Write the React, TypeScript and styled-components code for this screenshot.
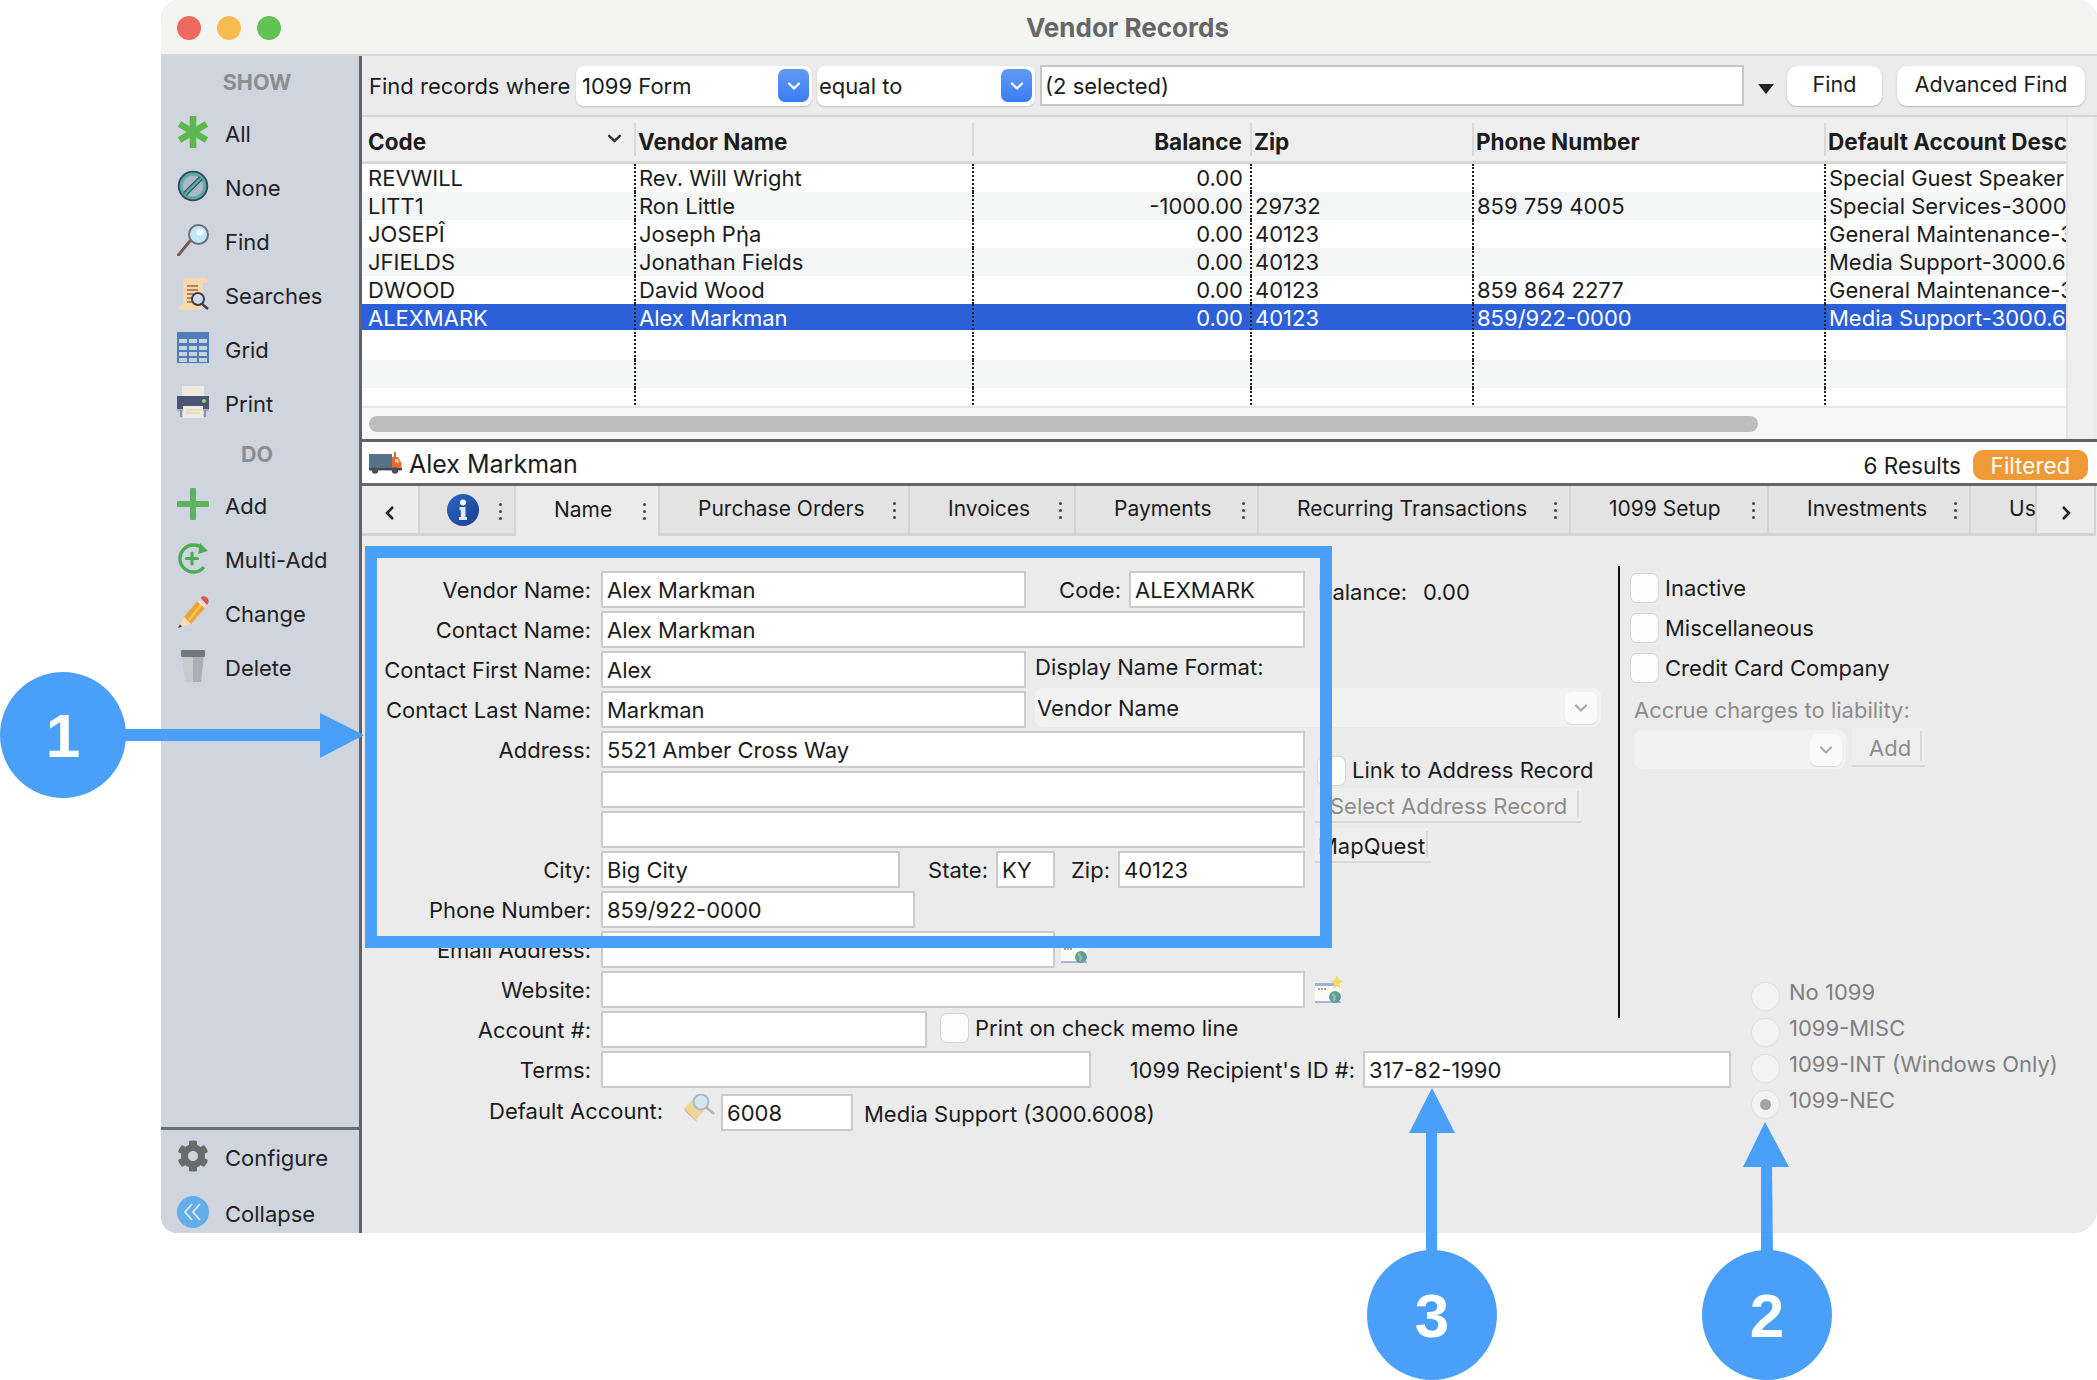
import * as React from "react";
import styled, { createGlobalStyle } from "styled-components";
import { FaCog } from "react-icons/fa";

const FONT = `"Inter", "Liberation Sans", Arial, sans-serif`;
const BLUE = "#4a9ff8";

const GlobalStyle = createGlobalStyle`
  html, body { margin: 0; padding: 0; background: #fff; }
  body { font-family: ${FONT}; font-size: 22px; color: #1c1c1c; }
  * { box-sizing: border-box; }
`;

const Page = styled.div`
  position: relative;
  width: 2097px;
  height: 1380px;
  padding-left: 161px;
  overflow: hidden;
`;

const Window = styled.div`
  width: 1936px;
  height: 1233px;
  display: flex;
  flex-direction: column;
  background: #ebebeb;
  border-radius: 18px 18px 22px 16px;
  overflow: hidden;
`;

const TitleBar = styled.div`
  position: relative;
  height: 56px;
  flex: none;
  display: flex;
  align-items: center;
  justify-content: center;
  padding-right: 3px;
  background: #f4f4f2;
  border-bottom: 2px solid #d9d9d9;
  font-weight: 700;
  font-size: 26px;
  color: #666;
`;

const Lights = styled.div`
  position: absolute;
  left: 16px;
  top: 16px;
  display: flex;
  gap: 16px;
`;

const Light = styled.span<{ $c: string }>`
  width: 24px;
  height: 24px;
  border-radius: 50%;
  background: ${(p) => p.$c};
`;

const Body = styled.div`
  flex: 1;
  display: flex;
  min-height: 0;
`;

const Sidebar = styled.div`
  width: 201px;
  flex: none;
  display: flex;
  flex-direction: column;
  background: #cfd5de;
  border-right: 3px solid #5f6368;
`;

const SideHead = styled.div<{ $h: number }>`
  height: ${(p) => p.$h}px;
  display: flex;
  align-items: flex-end;
  justify-content: center;
  padding: 0 6px 10px 0;
  font-weight: 700;
  font-size: 21.5px;
  color: #8a8d92;
`;

const SideItem = styled.div<{ $h?: number }>`
  height: ${(p) => p.$h || 54}px;
  display: flex;
  align-items: center;
  padding-left: 16px;
  gap: 17px;
  color: #222;
`;

const IconBox = styled.span`
  width: 32px;
  height: 32px;
  flex: none;
  display: flex;
  align-items: center;
  justify-content: center;
`;

const SideLabel = styled.span`
  line-height: 1;
  margin: 4px 0 0 -1px;
`;

const SideFooter = styled.div`
  margin-top: auto;
  height: 106px;
  flex: none;
  border-top: 3px solid #6a6e74;
`;

const Main = styled.div`
  flex: 1;
  min-width: 0;
  display: flex;
  flex-direction: column;
`;

const FindBar = styled.div`
  height: 61px;
  flex: none;
  display: flex;
  align-items: center;
  padding: 0 0 0 7px;
  border-bottom: 2px solid #d6d6d6;
`;

const FindLabel = styled.span`
  width: 207px;
  flex: none;
  white-space: nowrap;
`;

const SelectBox = styled.div<{ $w: number; $ml?: number; $pl: number }>`
  width: ${(p) => p.$w}px;
  margin-left: ${(p) => p.$ml || 0}px;
  height: 40px;
  flex: none;
  display: flex;
  align-items: center;
  justify-content: space-between;
  padding: 0 3px 0 ${(p) => p.$pl}px;
  background: #fff;
  border-radius: 8px;
  box-shadow: 0 1px 2px rgba(0, 0, 0, 0.18);
`;

const BlueChevron = styled.span`
  width: 31px;
  height: 33px;
  display: flex;
  align-items: center;
  justify-content: center;
  border-radius: 7px;
  background: linear-gradient(#5f9bf6, #3a7df0);
`;

const QueryField = styled.div`
  width: 704px;
  height: 41px;
  flex: none;
  margin-left: 5px;
  display: flex;
  align-items: center;
  padding-left: 3px;
  background: #fff;
  border: 2px solid #c6c6c6;
`;

const FindCaret = styled.span`
  width: 43px;
  flex: none;
  display: flex;
  justify-content: center;
  padding-top: 6px;
`;

const PushButton = styled.div<{ $w: number; $ml?: number }>`
  width: ${(p) => p.$w}px;
  margin-left: ${(p) => p.$ml || 0}px;
  height: 40px;
  flex: none;
  display: flex;
  align-items: center;
  justify-content: center;
  padding-bottom: 3px;
  background: #fff;
  border-radius: 10px;
  box-shadow: 0 1px 2px rgba(0, 0, 0, 0.22);
  font-size: 21.5px;
`;

const RecordArea = styled.div`
  flex: none;
  display: flex;
  height: 325px;
  border-bottom: 3px solid #626262;
`;

const RecordLeft = styled.div`
  width: 1704px;
  flex: none;
  display: flex;
  flex-direction: column;
`;

const Gutter = styled.div`
  flex: 1;
  margin-right: 4px;
  background: #efefef;
  border-left: 2px solid #e4e4e4;
`;

const COLS = "272px 338px 278px 222px 352px 242px";

const HeadRow = styled.div`
  height: 47px;
  flex: none;
  display: grid;
  grid-template-columns: ${COLS};
  background: #efefef;
  border-bottom: 3px solid #d8d8d8;
`;

const HeadCell = styled.div<{ $right?: boolean; $first?: boolean }>`
  position: relative;
  display: flex;
  align-items: center;
  justify-content: ${(p) => (p.$right ? "flex-end" : "space-between")};
  padding: 5px ${(p) => (p.$right ? "8px" : "0")} 0 ${(p) => (p.$first ? "6px" : "4px")};
  font-weight: 700;
  font-size: 22.5px;
  white-space: nowrap;
  &::before {
    content: "";
    display: ${(p) => (p.$first ? "none" : "block")};
    position: absolute;
    left: 0;
    top: 6px;
    bottom: 5px;
    width: 2px;
    background: #dadada;
  }
`;

const HeadChevron = styled.span`
  margin: 0 12px 6px 0;
  display: flex;
`;

const RowsBox = styled.div`
  height: 244px;
  flex: none;
  overflow: hidden;
  border-bottom: 2px solid #e6e6e6;
`;

const Row = styled.div<{ $alt: boolean; $sel: boolean }>`
  height: 28px;
  display: grid;
  grid-template-columns: ${COLS};
  background: ${(p) => (p.$sel ? "#2b60d9" : p.$alt ? "#f4f5f5" : "#fff")};
  color: ${(p) => (p.$sel ? "#fff" : "#1c1c1c")};
  border-bottom: ${(p) => (p.$sel ? "2px solid #fff" : "none")};
`;

const Cell = styled.div<{ $right?: boolean; $first?: boolean }>`
  padding: 0 ${(p) => (p.$right ? "7px" : "0")} 0 ${(p) => (p.$first ? "6px" : "3px")};
  line-height: 28px;
  text-align: ${(p) => (p.$right ? "right" : "left")};
  white-space: nowrap;
  overflow: hidden;
  border-left: ${(p) => (p.$first ? "none" : "2px dotted #222")};
`;

const ScrollTrack = styled.div`
  flex: 1;
  padding: 8px 0 0 7px;
  background: #f8f8f8;
`;

const ScrollThumb = styled.div`
  width: 1389px;
  height: 16px;
  border-radius: 8px;
  background: #bdbdbd;
`;

const DetailHead = styled.div`
  height: 44px;
  flex: none;
  display: flex;
  align-items: center;
  padding: 5px 9px 0 7px;
  background: #fff;
  border-bottom: 3px solid #666;
`;

const TruckSlot = styled.span`
  display: flex;
  margin-top: -5px;
`;

const DetailName = styled.span`
  margin: -3px 0 0 7px;
  font-size: 25px;
`;

const ResultCount = styled.span`
  margin-left: auto;
  font-size: 22.5px;
`;

const FilteredPill = styled.span`
  width: 115px;
  height: 30px;
  margin-left: 12px;
  display: flex;
  align-items: center;
  justify-content: center;
  border-radius: 10px;
  background: #f09a37;
  color: #fff;
  font-size: 22.5px;
`;

const TabBar = styled.div`
  height: 50px;
  flex: none;
  display: flex;
`;

const Tab = styled.div<{ $w: number; $active?: boolean }>`
  width: ${(p) => p.$w}px;
  flex: none;
  display: flex;
  align-items: center;
  justify-content: space-between;
  padding: 0 12px 3px 38px;
  font-size: 21px;
  white-space: nowrap;
  background: ${(p) => (p.$active ? "#ebebeb" : "#e3e3e3")};
  border-right: 2px solid #d4d4d4;
  border-bottom: ${(p) => (p.$active ? "none" : "3px solid #d4d4d4")};
`;

const NavTab = styled.div<{ $w: number }>`
  width: ${(p) => p.$w}px;
  flex: none;
  display: flex;
  align-items: center;
  justify-content: center;
  padding-top: 2px;
  background: #ebebeb;
  border-right: 2px solid #d4d4d4;
  border-bottom: 3px solid #d4d4d4;
`;

const InfoTab = styled(Tab)`
  padding: 0 12px 0 27px;
`;

const Kebab = styled.span`
  display: flex;
  flex-direction: column;
  gap: 4px;
  padding-top: 4px;
  i {
    display: block;
    width: 3px;
    height: 3px;
    border-radius: 50%;
    background: #444;
  }
`;

const DetailBody = styled.div`
  flex: 1;
  display: flex;
  padding-top: 35px;
`;

const LeftCol = styled.div`
  width: 953px;
  flex: none;
`;

const FormRow = styled.div`
  height: 40px;
  width: max-content;
  display: flex;
  align-items: flex-start;
`;

const AccountRow = styled(FormRow)`
  padding-top: 1px;
`;

const Label = styled.div<{ $w: number }>`
  width: ${(p) => p.$w}px;
  flex: none;
  height: 37px;
  padding-right: ${(p) => (p.$w === 239 ? "10px" : "8px")};
  line-height: 39px;
  text-align: right;
  white-space: nowrap;
`;

const Field = styled.div<{ $w: number; $mt?: number }>`
  width: ${(p) => p.$w}px;
  height: 37px;
  flex: none;
  margin-top: ${(p) => p.$mt || 0}px;
  padding-left: 4px;
  line-height: 35px;
  background: #fff;
  border: 2px solid #cbcbcb;
  white-space: nowrap;
`;

const Plain = styled.div<{ $ml?: number; $mt?: number }>`
  margin-left: ${(p) => p.$ml || 0}px;
  margin-top: ${(p) => p.$mt || 0}px;
  line-height: 37px;
  white-space: nowrap;
`;

const GrayPick = styled.div<{ $w: number; $ml?: number; $mt?: number }>`
  width: ${(p) => p.$w}px;
  height: 39px;
  flex: none;
  margin-left: ${(p) => p.$ml || 0}px;
  margin-top: ${(p) => p.$mt || 0}px;
  display: flex;
  align-items: center;
  justify-content: space-between;
  padding: 0 4px 0 2px;
  background: #f2f2f2;
  border-radius: 8px;
`;

const PickChevron = styled.span`
  width: 32px;
  height: 32px;
  display: flex;
  align-items: center;
  justify-content: center;
  background: #fafafa;
  border-radius: 7px;
  box-shadow: 0 1px 1px rgba(0, 0, 0, 0.1);
`;

const Check = styled.span<{ $ml?: number; $mt?: number }>`
  width: 27px;
  height: 28px;
  flex: none;
  margin-left: ${(p) => p.$ml || 0}px;
  margin-top: ${(p) => p.$mt || 0}px;
  background: #fdfdfd;
  border-radius: 6px;
  box-shadow: 0 0 0 1px #d6d6d6;
`;

const MidCol = styled.div`
  width: 303px;
  flex: none;
  display: flex;
  flex-direction: column;
  align-items: flex-start;
`;

const BalanceRow = styled.div`
  height: 40px;
  padding: 3px 0 0 3px;
  display: flex;
  line-height: 37px;
  span:first-child {
    width: 105px;
  }
`;

const LinkRow = styled.div`
  margin-top: 146px;
  height: 31px;
  padding-left: 3px;
  display: flex;
  align-items: flex-start;
  gap: 7px;
  line-height: 27px;
`;

const GhostButton = styled.div<{ $w: number; $muted?: boolean; $pad: number }>`
  width: ${(p) => p.$w}px;
  height: 35px;
  margin-bottom: 5px;
  padding-left: ${(p) => p.$pad}px;
  background: #eeeeee;
  border-bottom: 2px solid #d8d8d8;
  color: ${(p) => (p.$muted ? "#8d8d8d" : "#1c1c1c")};
  line-height: 36px;
  white-space: nowrap;
  position: relative;
  &::after {
    content: "";
    position: absolute;
    right: 3px;
    top: 3px;
    bottom: 4px;
    width: 2px;
    background: #d8d8d8;
  }
`;

const VLine = styled.div`
  width: 2px;
  height: 452px;
  flex: none;
  margin-top: -5px;
  background: #111;
`;

const RightCol = styled.div`
  flex: 1;
  padding: 3px 0 0 11px;
`;

const CheckRow = styled.div`
  height: 40px;
  display: flex;
  align-items: flex-start;
  gap: 7px;
  line-height: 28px;
`;

const AccrueLabel = styled.div`
  height: 36px;
  padding-left: 3px;
  line-height: 32px;
  color: #8d8d8d;
`;

const AccrueRow = styled.div`
  display: flex;
  gap: 6px;
  padding-left: 3px;
`;

const AddButton = styled(GhostButton)`
  margin-top: -2px;
  height: 39px;
  line-height: 41px;
`;

const RadioGroup = styled.div`
  margin: 211px 0 0 121px;
`;

const RadioRow = styled.div`
  height: 36px;
  display: flex;
  align-items: flex-start;
  gap: 10px;
  line-height: 18px;
  color: #808080;
  white-space: nowrap;
`;

const Radio = styled.span<{ $on?: boolean }>`
  width: 27px;
  height: 27px;
  flex: none;
  display: flex;
  align-items: center;
  justify-content: center;
  border-radius: 50%;
  background: #f3f3f3;
  box-shadow: 0 0 0 1px #e0e0e0;
  &::after {
    content: "";
    display: ${(p) => (p.$on ? "block" : "none")};
    width: 11px;
    height: 11px;
    border-radius: 50%;
    background: #a3a3a3;
  }
`;

const IconSlot = styled.span<{ $ml: number; $mt?: number; $w: number }>`
  width: ${(p) => p.$w}px;
  flex: none;
  margin-left: ${(p) => p.$ml}px;
  margin-top: ${(p) => p.$mt || 0}px;
  display: flex;
`;

/* callouts drawn over the screenshot */
const HighlightBox = styled.div`
  position: absolute;
  left: 365px;
  top: 546px;
  width: 967px;
  height: 402px;
  border: 12px solid ${BLUE};
`;

const ArrowLayer = styled.svg`
  position: absolute;
  left: 0;
  top: 0;
  pointer-events: none;
`;

const Marker = styled.div<{ $x: number; $y: number; $r: number }>`
  position: absolute;
  left: ${(p) => p.$x - p.$r}px;
  top: ${(p) => p.$y - p.$r}px;
  width: ${(p) => p.$r * 2}px;
  height: ${(p) => p.$r * 2}px;
  display: flex;
  align-items: center;
  justify-content: center;
  border-radius: 50%;
  background: ${BLUE};
  color: #fff;
  font-family: "Liberation Sans", Arial, sans-serif;
  font-weight: 700;
  font-size: 62px;
`;

const Chevron = ({ color, size = 14 }: { color: string; size?: number }) => (
  <svg width={size} height={size} viewBox="0 0 14 14">
    <path d="M2 4.5 L7 9.5 L12 4.5" fill="none" stroke={color} strokeWidth="2.2" strokeLinecap="round" strokeLinejoin="round" />
  </svg>
);

const NavArrow = ({ dir }: { dir: "l" | "r" }) => (
  <svg width="12" height="18" viewBox="0 0 12 18" style={{ marginTop: 4 }}>
    <path d={dir === "l" ? "M9 3 L3 9 L9 15" : "M3 3 L9 9 L3 15"} fill="none" stroke="#222" strokeWidth="2.6" />
  </svg>
);

const AllIcon = () => (
  <svg width="32" height="32" viewBox="0 0 32 32">
    <g stroke="#5bb84b" strokeWidth="6.5">
      <path d="M16 0 V32" />
      <path d="M2.5 8 L29.5 24" />
      <path d="M2.5 24 L29.5 8" />
    </g>
  </svg>
);

const NoneIcon = () => (
  <svg width="32" height="32" viewBox="0 0 32 32">
    <circle cx="16" cy="16" r="15.2" fill="#37474d" />
    <circle cx="16" cy="16" r="13.4" fill="#58a9b2" />
    <circle cx="16" cy="16" r="10.4" fill="#a9bbc4" />
    <path d="M8 24 L24 8" stroke="#37474d" strokeWidth="5" />
    <path d="M8 24 L24 8" stroke="#58a9b2" strokeWidth="2.6" />
  </svg>
);

const FindIcon = () => (
  <svg width="32" height="32" viewBox="0 0 32 32">
    <path d="M1.5 31 L13 17" stroke="#7d5a52" strokeWidth="3" strokeLinecap="round" />
    <circle cx="21.5" cy="10.5" r="9.5" fill="#c3e6f7" stroke="#6d6f80" strokeWidth="2" />
    <circle cx="23" cy="8" r="3.5" fill="#f4fbff" />
  </svg>
);

const SearchesIcon = () => (
  <svg width="32" height="32" viewBox="0 0 32 32">
    <path d="M6 2 Q6 0 9 0 H29 Q32 2 30 5 H26 V28 Q26 32 22 32 H1 Q0 28 4 27 H6 Z" fill="#f6d8ae" />
    <g stroke="#a96c4a" strokeWidth="1.6">
      <path d="M10 8 H21" />
      <path d="M10 12 H21" />
      <path d="M10 16 H17" />
      <path d="M10 20 H15" />
      <path d="M10 24 H15" />
    </g>
    <circle cx="21" cy="21" r="6" fill="#cfdbe8" stroke="#3e3e44" strokeWidth="2" />
    <path d="M25 26 L31 31" stroke="#3e3e44" strokeWidth="2.4" />
  </svg>
);

const GridIcon = () => (
  <svg width="32" height="32" viewBox="0 0 32 32">
    <rect width="32" height="31" fill="#517db6" />
    {[7, 14, 20, 26].map((y) =>
      [2, 12, 22].map((x) => <rect key={`${x}-${y}`} x={x} y={y} width="8" height="4" fill="#c5d2e2" />)
    )}
  </svg>
);

const PrintIcon = () => (
  <svg width="32" height="32" viewBox="0 0 32 32">
    <rect x="5" y="0" width="22" height="11" fill="#efeadc" />
    <rect x="0" y="10" width="32" height="14" fill="#4a5578" />
    <rect x="0" y="23" width="32" height="2.5" fill="#aeb2b8" />
    <circle cx="27" cy="15" r="2" fill="#a4d65e" />
    <path d="M4 24 V31 M28 24 V31" stroke="#8b93b5" strokeWidth="2" />
    <rect x="6" y="20" width="20" height="12" fill="#efeadc" />
    <path d="M9 24 H23 M9 27 H23" stroke="#d8d2bf" strokeWidth="1.2" />
  </svg>
);

const AddIcon = () => (
  <svg width="32" height="32" viewBox="0 0 32 32">
    <path d="M16 2 V30 M2 16 H30" stroke="#5cb35c" strokeWidth="6" strokeLinecap="round" />
  </svg>
);

const MultiAddIcon = () => (
  <svg width="32" height="32" viewBox="0 0 32 32">
    <path d="M26 7 A13.5 13.5 0 1 0 27 25" fill="none" stroke="#4cab55" strokeWidth="3.4" />
    <path d="M23 1 L31 9 L21 12 Z" fill="#4cab55" />
    <path d="M15 11 V22 M9.5 16.5 H20.5" stroke="#4cab55" strokeWidth="3.2" strokeLinecap="round" />
  </svg>
);

const ChangeIcon = () => (
  <svg width="32" height="32" viewBox="0 0 32 32">
    <path d="M7 21 L22 3 L30 9.5 L14 28 Z" fill="#f0a22e" />
    <path d="M12 24 L26 6.5" stroke="#fbc662" strokeWidth="2.5" />
    <path d="M7 21 L14 28 L1 32 Z" fill="#f6dcae" />
    <path d="M3 28.5 L5 30.5 L1 32 Z" fill="#333" />
    <path d="M22 3 L30 9.5 L28 12 L20 5.5 Z" fill="#e9e3d3" />
    <path d="M23.5 1.5 Q27 -1 30.5 2 Q33 6 30 9 Z" fill="#d4574a" />
  </svg>
);

const DeleteIcon = () => (
  <svg width="32" height="32" viewBox="0 0 32 32">
    <path d="M5 6 H16 V32 H8 Z" fill="#c9cacf" />
    <path d="M16 6 H27 L24 32 H16 Z" fill="#aeafb4" />
    <rect x="4" y="0" width="24" height="7" rx="1" fill="#76777d" />
  </svg>
);

const CollapseIcon = () => (
  <svg width="32" height="32" viewBox="0 0 32 32">
    <circle cx="16" cy="16" r="16" fill="#63aee6" />
    <path d="M15 8 L8 16 L15 24 M23 8 L16 16 L23 24" fill="none" stroke="#d7ecfb" strokeWidth="1.8" />
  </svg>
);

const TruckIcon = () => (
  <svg width="33" height="22" viewBox="0 0 33 22">
    <path d="M0 2 H23 V16 H0 Z" fill="#567188" />
    <path d="M23 5 H29 L32.5 11 V17 H23 Z" fill="#ee6a2c" />
    <path d="M26 0 V5" stroke="#c5462a" strokeWidth="1.6" />
    <path d="M26 7 H29 L30.5 10.5 H26 Z" fill="#f8c9a6" />
    <rect x="0" y="16" width="33" height="2.4" fill="#3c4a57" />
    <circle cx="6" cy="18.5" r="3.2" fill="#4a4f55" />
    <circle cx="26" cy="18.5" r="3.2" fill="#4a4f55" />
  </svg>
);

const InfoIcon = () => (
  <svg width="32" height="32" viewBox="0 0 32 32">
    <defs>
      <linearGradient id="infoFill" x1="0" y1="0" x2="1" y2="1">
        <stop offset="0" stopColor="#2f66c4" />
        <stop offset="1" stopColor="#173f8f" />
      </linearGradient>
    </defs>
    <circle cx="16" cy="16" r="16" fill="url(#infoFill)" />
    <circle cx="16" cy="8.5" r="3" fill="#fff" />
    <path d="M12.5 13 H18.5 V23 H20 V26 H12 V23 H13.8 V16 H12.5 Z" fill="#dfe9f8" />
  </svg>
);

const WebIcon = ({ star }: { star?: boolean }) => (
  <svg width="28" height="28" viewBox="0 0 28 28">
    <rect x="0" y="8" width="26" height="20" fill="#fbfbf6" />
    <rect x="0" y="8" width="24" height="3" fill="#9fb0db" />
    <rect x="0" y="26" width="26" height="2" fill="#a9b4d6" />
    <path d="M3 14 H12" stroke="#888" strokeWidth="1.4" strokeDasharray="2 1" />
    <circle cx="20" cy="22" r="6" fill="#5d9ea5" />
    <path d="M17 19 Q21 21 19 26" stroke="#a9c27a" strokeWidth="2" fill="none" />
    {star && <path d="M22 0 L24 5 L28 6 L24.5 9 L25.5 14 L22 11 L18 14 L19.2 9 L16 6 L20 5 Z" fill="#f7d862" />}
  </svg>
);

const LookupIcon = () => (
  <svg width="31" height="28" viewBox="0 0 31 28">
    <path d="M0 14 L13 3 L24 12 L12 26 Z" fill="#f1d793" />
    <path d="M0 14 L12 26 L13 28 L1 17 Z" fill="#dfa98f" />
    <circle cx="17" cy="8" r="7.5" fill="#d6e6ee" stroke="#9fc0cf" strokeWidth="2" />
    <path d="M22 13 L30 20" stroke="#b7b5a8" strokeWidth="2.5" />
  </svg>
);

const Dots = () => (
  <Kebab>
    <i />
    <i />
    <i />
  </Kebab>
);

const topNav = [
  { label: "All", icon: <AllIcon /> },
  { label: "None", icon: <NoneIcon /> },
  { label: "Find", icon: <FindIcon /> },
  { label: "Searches", icon: <SearchesIcon /> },
  { label: "Grid", icon: <GridIcon /> },
  { label: "Print", icon: <PrintIcon /> },
];

const doNav = [
  { label: "Add", icon: <AddIcon /> },
  { label: "Multi-Add", icon: <MultiAddIcon /> },
  { label: "Change", icon: <ChangeIcon /> },
  { label: "Delete", icon: <DeleteIcon /> },
];

const rows = [
  ["REVWILL", "Rev. Will Wright", "0.00", "", "", "Special Guest Speaker"],
  ["LITT1", "Ron Little", "-1000.00", "29732", "859 759 4005", "Special Services-3000.6000"],
  ["JOSEPÎ", "Joseph Pήa", "0.00", "40123", "", "General Maintenance-3000.6000"],
  ["JFIELDS", "Jonathan Fields", "0.00", "40123", "", "Media Support-3000.6008"],
  ["DWOOD", "David Wood", "0.00", "40123", "859 864 2277", "General Maintenance-3000.6000"],
  ["ALEXMARK", "Alex Markman", "0.00", "40123", "859/922-0000", "Media Support-3000.6008"],
  ["", "", "", "", "", ""],
  ["", "", "", "", "", ""],
  ["", "", "", "", "", ""],
];

const tabs = [
  { label: "Purchase Orders", w: 250 },
  { label: "Invoices", w: 166 },
  { label: "Payments", w: 183 },
  { label: "Recurring Transactions", w: 312 },
  { label: "1099 Setup", w: 198 },
  { label: "Investments", w: 202 },
];

const headers = ["Code", "Vendor Name", "Balance", "Zip", "Phone Number", "Default Account Desc"];

export default function App() {
  return (
    <Page>
      <GlobalStyle />
      <Window>
        <TitleBar>
          <Lights>
            <Light $c="#ee6a5f" />
            <Light $c="#f5bd4f" />
            <Light $c="#61c354" />
          </Lights>
          Vendor Records
        </TitleBar>
        <Body>
          <Sidebar>
            <SideHead $h={49}>SHOW</SideHead>
            {topNav.map((n) => (
              <SideItem key={n.label}>
                <IconBox>{n.icon}</IconBox>
                <SideLabel>{n.label}</SideLabel>
              </SideItem>
            ))}
            <SideHead $h={48}>DO</SideHead>
            {doNav.map((n) => (
              <SideItem key={n.label}>
                <IconBox>{n.icon}</IconBox>
                <SideLabel>{n.label}</SideLabel>
              </SideItem>
            ))}
            <SideFooter>
              <SideItem $h={52}>
                <IconBox>
                  <FaCog size={32} color="#6b6b6b" />
                </IconBox>
                <SideLabel>Configure</SideLabel>
              </SideItem>
              <SideItem $h={60}>
                <IconBox>
                  <CollapseIcon />
                </IconBox>
                <SideLabel>Collapse</SideLabel>
              </SideItem>
            </SideFooter>
          </Sidebar>
          <Main>
            <FindBar>
              <FindLabel>Find records where</FindLabel>
              <SelectBox $w={236} $pl={6}>
                1099 Form
                <BlueChevron>
                  <Chevron color="#fff" />
                </BlueChevron>
              </SelectBox>
              <SelectBox $w={218} $ml={5} $pl={2}>
                equal to
                <BlueChevron>
                  <Chevron color="#fff" />
                </BlueChevron>
              </SelectBox>
              <QueryField>(2 selected)</QueryField>
              <FindCaret>
                <svg width="16" height="10" viewBox="0 0 16 10">
                  <path d="M0 0 H16 L8 10 Z" fill="#222" />
                </svg>
              </FindCaret>
              <PushButton $w={95}>Find</PushButton>
              <PushButton $w={188} $ml={15}>
                Advanced Find
              </PushButton>
            </FindBar>
            <RecordArea>
              <RecordLeft>
                <HeadRow>
                  {headers.map((h, i) => (
                    <HeadCell key={h} $right={i === 2} $first={i === 0}>
                      {h}
                      {i === 0 && (
                        <HeadChevron>
                          <Chevron color="#333" size={15} />
                        </HeadChevron>
                      )}
                    </HeadCell>
                  ))}
                </HeadRow>
                <RowsBox>
                  {rows.map((r, i) => (
                    <Row key={i} $alt={i % 2 === 1} $sel={i === 5}>
                      {r.map((c, j) => (
                        <Cell key={j} $right={j === 2} $first={j === 0}>
                          {c}
                        </Cell>
                      ))}
                    </Row>
                  ))}
                </RowsBox>
                <ScrollTrack>
                  <ScrollThumb />
                </ScrollTrack>
              </RecordLeft>
              <Gutter />
            </RecordArea>
            <DetailHead>
              <TruckSlot>
                <TruckIcon />
              </TruckSlot>
              <DetailName>Alex Markman</DetailName>
              <ResultCount>6 Results</ResultCount>
              <FilteredPill>Filtered</FilteredPill>
            </DetailHead>
            <TabBar>
              <NavTab $w={58}>
                <NavArrow dir="l" />
              </NavTab>
              <InfoTab $w={96}>
                <InfoIcon />
                <Dots />
              </InfoTab>
              <Tab $w={144} $active>
                Name
                <Dots />
              </Tab>
              {tabs.map((t) => (
                <Tab key={t.label} $w={t.w}>
                  {t.label}
                  <Dots />
                </Tab>
              ))}
              <Tab $w={66}>Us</Tab>
              <NavTab $w={59}>
                <NavArrow dir="r" />
              </NavTab>
            </TabBar>
            <DetailBody>
              <LeftCol>
                <FormRow>
                  <Label $w={239}>Vendor Name:</Label>
                  <Field $w={425}>Alex Markman</Field>
                  <Label $w={103}>Code:</Label>
                  <Field $w={176}>ALEXMARK</Field>
                </FormRow>
                <FormRow>
                  <Label $w={239}>Contact Name:</Label>
                  <Field $w={704}>Alex Markman</Field>
                </FormRow>
                <FormRow>
                  <Label $w={239}>Contact First Name:</Label>
                  <Field $w={425}>Alex</Field>
                  <Plain $ml={9} $mt={-2}>
                    Display Name Format:
                  </Plain>
                </FormRow>
                <FormRow>
                  <Label $w={239}>Contact Last Name:</Label>
                  <Field $w={425}>Markman</Field>
                  <GrayPick $w={566} $ml={9} $mt={-3}>
                    Vendor Name
                    <PickChevron>
                      <Chevron color="#aaa" />
                    </PickChevron>
                  </GrayPick>
                </FormRow>
                <FormRow>
                  <Label $w={239}>Address:</Label>
                  <Field $w={704}>5521 Amber Cross Way</Field>
                </FormRow>
                <FormRow>
                  <Label $w={239} />
                  <Field $w={704} />
                </FormRow>
                <FormRow>
                  <Label $w={239} />
                  <Field $w={704} />
                </FormRow>
                <FormRow>
                  <Label $w={239}>City:</Label>
                  <Field $w={299}>Big City</Field>
                  <Label $w={96}>State:</Label>
                  <Field $w={59}>KY</Field>
                  <Label $w={63}>Zip:</Label>
                  <Field $w={187}>40123</Field>
                </FormRow>
                <FormRow>
                  <Label $w={239}>Phone Number:</Label>
                  <Field $w={314}>859/922-0000</Field>
                </FormRow>
                <FormRow>
                  <Label $w={239}>Email Address:</Label>
                  <Field $w={454} />
                  <IconSlot $ml={6} $mt={4} $w={28}>
                    <WebIcon />
                  </IconSlot>
                </FormRow>
                <FormRow>
                  <Label $w={239}>Website:</Label>
                  <Field $w={704} />
                  <IconSlot $ml={10} $mt={4} $w={28}>
                    <WebIcon star />
                  </IconSlot>
                </FormRow>
                <FormRow>
                  <Label $w={239}>Account #:</Label>
                  <Field $w={326} />
                  <Check $ml={14} $mt={3} />
                  <Plain $ml={7} $mt={-1}>
                    Print on check memo line
                  </Plain>
                </FormRow>
                <FormRow>
                  <Label $w={239}>Terms:</Label>
                  <Field $w={490} />
                  <Label $w={272}>1099 Recipient's ID #:</Label>
                  <Field $w={368}>317-82-1990</Field>
                </FormRow>
                <AccountRow>
                  <Label $w={309}>Default Account:</Label>
                  <IconSlot $ml={13} $mt={2} $w={37}>
                    <LookupIcon />
                  </IconSlot>
                  <Field $w={132} $mt={2}>
                    6008
                  </Field>
                  <Plain $ml={11} $mt={4}>
                    Media Support (3000.6008)
                  </Plain>
                </AccountRow>
              </LeftCol>
              <MidCol>
                <BalanceRow>
                  <span>Balance:</span>
                  <span>0.00</span>
                </BalanceRow>
                <LinkRow>
                  <Check />
                  <span>Link to Address Record</span>
                </LinkRow>
                <GhostButton $w={267} $muted $pad={15}>
                  Select Address Record
                </GhostButton>
                <GhostButton $w={116} $pad={3}>
                  MapQuest
                </GhostButton>
              </MidCol>
              <VLine />
              <RightCol>
                <CheckRow>
                  <Check />
                  Inactive
                </CheckRow>
                <CheckRow>
                  <Check />
                  Miscellaneous
                </CheckRow>
                <CheckRow>
                  <Check />
                  Credit Card Company
                </CheckRow>
                <AccrueLabel>Accrue charges to liability:</AccrueLabel>
                <AccrueRow>
                  <GrayPick $w={212}>
                    <span />
                    <PickChevron>
                      <Chevron color="#aaa" />
                    </PickChevron>
                  </GrayPick>
                  <AddButton $w={73} $muted $pad={17}>
                    Add
                  </AddButton>
                </AccrueRow>
                <RadioGroup>
                  <RadioRow>
                    <Radio />
                    No 1099
                  </RadioRow>
                  <RadioRow>
                    <Radio />
                    1099-MISC
                  </RadioRow>
                  <RadioRow>
                    <Radio />
                    1099-INT (Windows Only)
                  </RadioRow>
                  <RadioRow>
                    <Radio $on />
                    1099-NEC
                  </RadioRow>
                </RadioGroup>
              </RightCol>
            </DetailBody>
          </Main>
        </Body>
      </Window>
      <HighlightBox />
      <ArrowLayer width="2097" height="1380" viewBox="0 0 2097 1380">
        <g fill={BLUE}>
          <rect x="120" y="729" width="202" height="12" />
          <path d="M320 713 L364 735 L320 758 Z" />
          <rect x="1426" y="1131" width="11" height="125" />
          <path d="M1409 1133 L1455 1133 L1432 1088 Z" />
          <path d="M1761 1165 L1772 1165 L1773 1256 L1761 1256 Z" />
          <path d="M1743 1167 L1789 1167 L1765 1122 Z" />
        </g>
      </ArrowLayer>
      <Marker $x={63} $y={735} $r={63}>1</Marker>
      <Marker $x={1432} $y={1315} $r={65}>3</Marker>
      <Marker $x={1767} $y={1315} $r={65}>2</Marker>
    </Page>
  );
}
